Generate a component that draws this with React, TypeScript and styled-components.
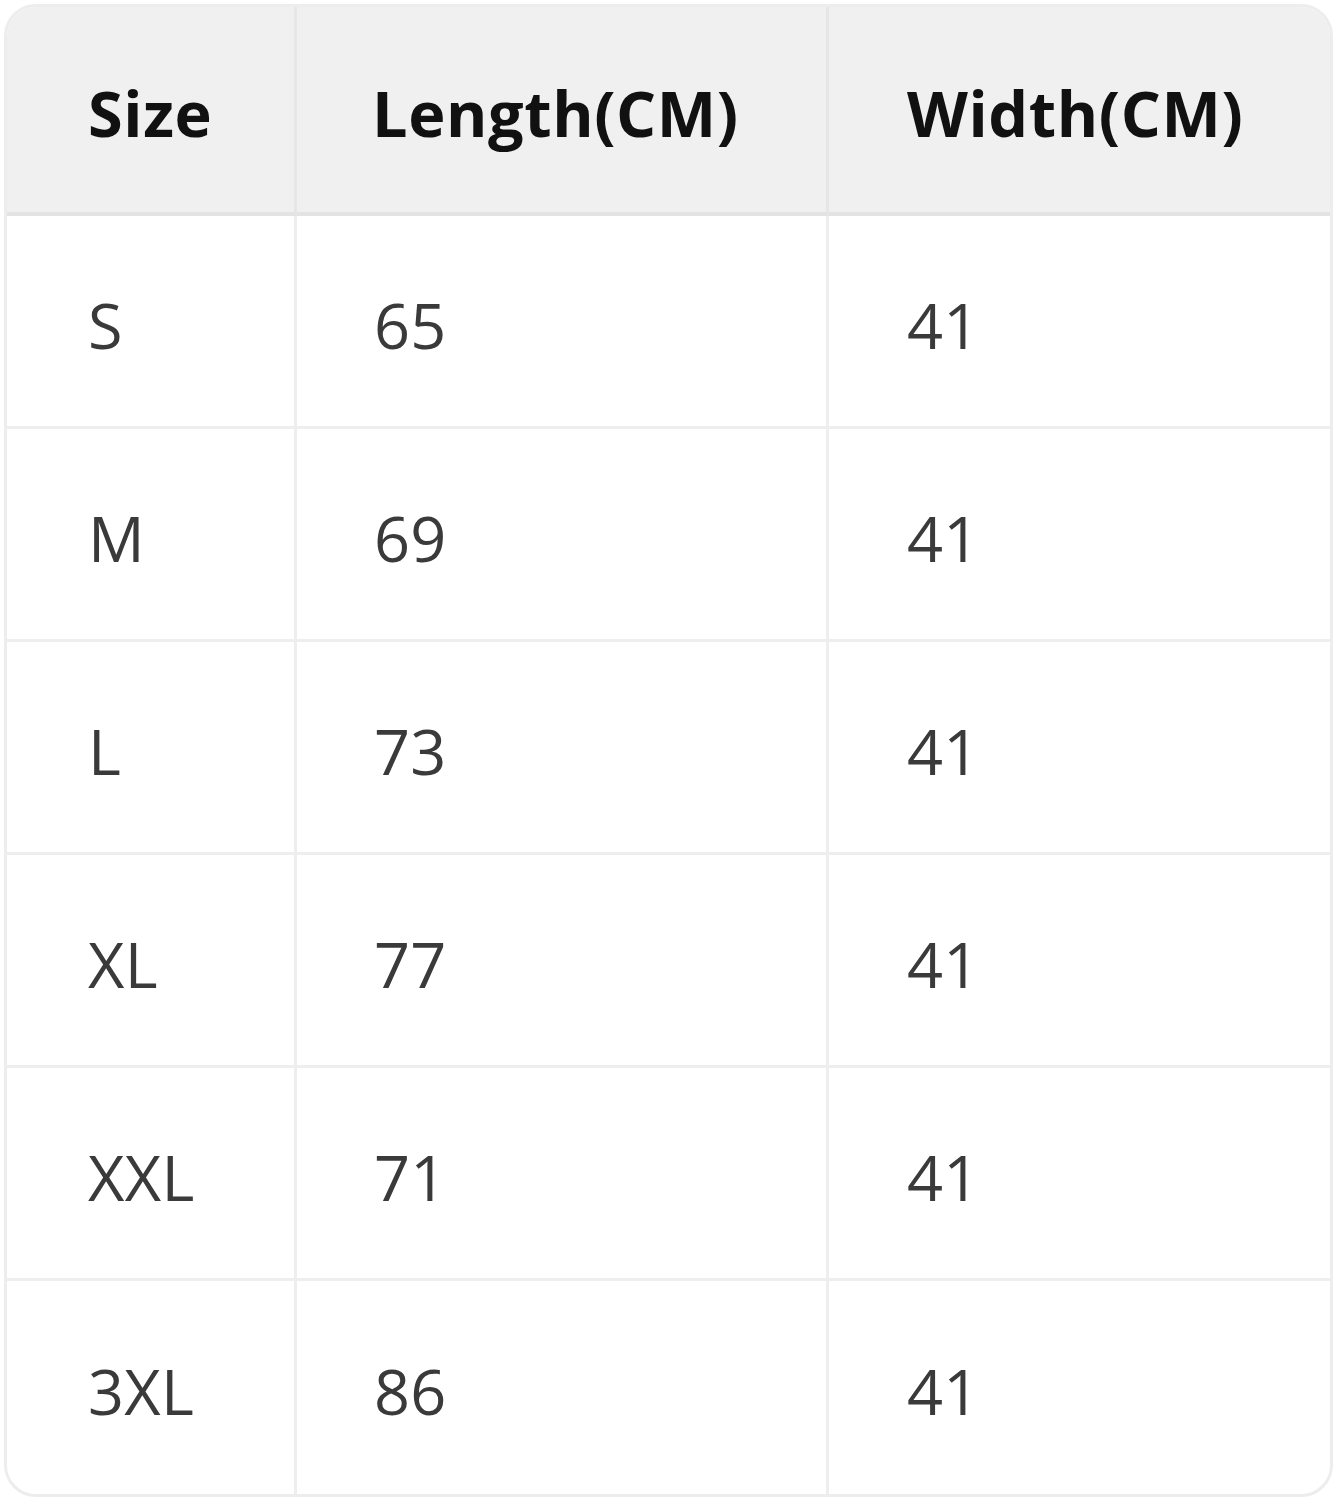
import React from "react";
import styled, { createGlobalStyle } from "styled-components";

const GlobalStyle = createGlobalStyle`
  html, body {
    margin: 0;
    padding: 0;
    background: #ffffff;
  }
`;

const Page = styled.div`
  padding: 4px 6px 4px 4px;
  font-family: "Open Sans", "Noto Sans", sans-serif;
`;

const Table = styled.table`
  width: 1329px;
  border-collapse: separate;
  border-spacing: 0;
  border: 3px solid #ededed;
  border-radius: 32px;
  overflow: hidden;
  table-layout: fixed;
`;

const HeadCell = styled.th<{ $w?: number; $pad: number; $last?: boolean }>`
  width: ${({ $w }) => ($w ? `${$w}px` : "auto")};
  height: 209px;
  padding: 6px 0 0 ${({ $pad }) => $pad}px;
  background: #f0f0f0;
  color: #111;
  font-size: 63px;
  font-weight: 700;
  text-align: left;
  letter-spacing: 0.6px;
  border-bottom: 4px solid #e3e3e3;
  border-right: ${({ $last }) => ($last ? "none" : "3px solid #e6e6e6")};
  box-sizing: border-box;
`;

const Cell = styled.td<{ $pad: number; $last?: boolean; $bottom?: boolean }>`
  height: 213px;
  padding: 6px 0 0 ${({ $pad }) => $pad}px;
  color: #3a3a3a;
  font-size: 63px;
  font-weight: 400;
  text-align: left;
  letter-spacing: 0.3px;
  border-bottom: ${({ $bottom }) => ($bottom ? "none" : "3px solid #eeeeee")};
  border-right: ${({ $last }) => ($last ? "none" : "3px solid #eeeeee")};
  box-sizing: border-box;
`;

const pads = [81, 77, 78];

const rows: [string, string, string][] = [
  ["S", "65", "41"],
  ["M", "69", "41"],
  ["L", "73", "41"],
  ["XL", "77", "41"],
  ["XXL", "71", "41"],
  ["3XL", "86", "41"],
];

export default function App() {
  return (
    <Page>
      <GlobalStyle />
      <Table>
        <thead>
          <tr>
            <HeadCell $w={290} $pad={pads[0]}>Size</HeadCell>
            <HeadCell $w={532} $pad={pads[1] - 2}>Length(CM)</HeadCell>
            <HeadCell $pad={pads[2]} $last>Width(CM)</HeadCell>
          </tr>
        </thead>
        <tbody>
          {rows.map((r, i) => (
            <tr key={r[0]}>
              {r.map((v, j) => (
                <Cell
                  key={j}
                  $pad={pads[j]}
                  $last={j === 2}
                  $bottom={i === rows.length - 1}
                >
                  {v}
                </Cell>
              ))}
            </tr>
          ))}
        </tbody>
      </Table>
    </Page>
  );
}
